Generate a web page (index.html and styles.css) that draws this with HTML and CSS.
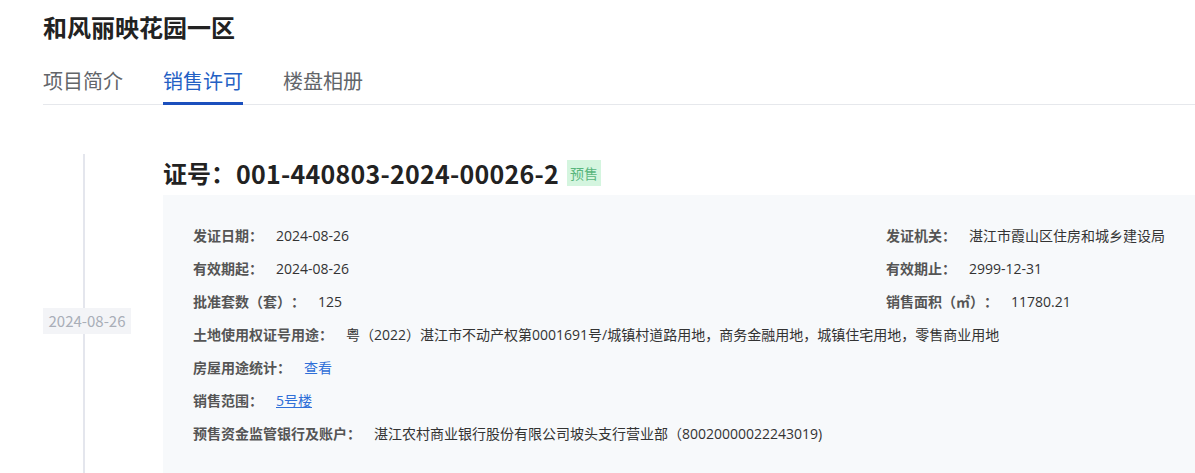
FILE: index.html
```html
<!DOCTYPE html>
<html lang="zh-CN">
<head>
<meta charset="utf-8">
<title>和风丽映花园一区</title>
<link rel="stylesheet" href="styles.css">
</head>
<body>
<div class="page">
  <h1 class="title">和风丽映花园一区</h1>
  <nav class="tabs">
    <span class="tab">项目简介</span>
    <span class="tab active">销售许可</span>
    <span class="tab">楼盘相册</span>
  </nav>
  <div class="item">
    <div class="rail"><span class="date">2024-08-26</span></div>
    <div class="content">
      <div class="heading"><span class="cert-label">证号：</span><span class="cert-no">001-440803-2024-00026-2</span><span class="tag">预售</span></div>
      <div class="box">
        <div class="row"><span class="label">发证日期：</span><span class="value">2024-08-26</span></div>
        <div class="row"><span class="label">发证机关：</span><span class="value">湛江市霞山区住房和城乡建设局</span></div>
        <div class="row"><span class="label">有效期起：</span><span class="value">2024-08-26</span></div>
        <div class="row"><span class="label">有效期止：</span><span class="value">2999-12-31</span></div>
        <div class="row"><span class="label">批准套数（套）：</span><span class="value">125</span></div>
        <div class="row"><span class="label">销售面积（㎡）：</span><span class="value">11780.21</span></div>
        <div class="row full"><span class="label">土地使用权证号用途：</span><span class="value">粤（2022）湛江市不动产权第0001691号/城镇村道路用地，商务金融用地，城镇住宅用地，零售商业用地</span></div>
        <div class="row full"><span class="label">房屋用途统计：</span><a class="value link">查看</a></div>
        <div class="row full"><span class="label">销售范围：</span><a class="value link under">5号楼</a></div>
        <div class="row full"><span class="label">预售资金监管银行及账户：</span><span class="value">湛江农村商业银行股份有限公司坡头支行营业部（80020000022243019)</span></div>
      </div>
    </div>
  </div>
</div>
</body>
</html>
```

FILE: styles.css
```css
* { box-sizing: border-box; }
html, body { margin: 0; padding: 0; background: #fff; }
body {
  font-family: "Noto Sans CJK SC", "Noto Sans", sans-serif;
  color: #333;
  overflow: hidden;
  text-spacing-trim: space-all;
}
.page { padding: 0 0 0 43px; }
.title {
  margin: 11px 0 0;
  font-size: 24px;
  line-height: 32px;
  font-weight: 700;
  color: #222;
}
.tabs {
  display: flex;
  gap: 40px;
  margin-top: 24px;
  border-bottom: 1px solid #e6e8ec;
}
.tab {
  font-size: 20px;
  line-height: 28px;
  padding-bottom: 7px;
  border-bottom: 3px solid transparent;
  margin-bottom: -1px;
  color: #626569;
}
.tab.active {
  color: #2360c4;
  border-bottom-color: #1b4fbd;
}
.item {
  display: grid;
  grid-template-columns: 120px 1fr;
  margin-top: 49px;
}
.rail {
  display: flex;
  align-items: center;
  background: linear-gradient(#e4e6ed, #e4e6ed) 40px 0 / 2px 100% no-repeat;
}
.date {
  width: 88px;
  height: 26px;
  line-height: 26px;
  text-align: center;
  font-size: 15px;
  color: #a9aeb8;
  background: #f3f4f7;
}
.heading {
  margin-top: 1px;
  font-size: 24px;
  line-height: 36px;
  font-weight: 700;
  color: #222;
  display: flex;
  align-items: center;
}
.cert-label { width: 73px; }
.cert-no { font-size: 25px; letter-spacing: 0.25px; }
.tag {
  margin-left: 8px;
  font-size: 14px;
  font-weight: 400;
  line-height: 26px;
  padding: 0 3px;
  letter-spacing: 0;
  color: #58b57c;
  background: #d4f5df;
}
.box {
  margin-top: 4px;
  background: #f7f9fb;
  padding: 24px 30px 37px;
  display: grid;
  grid-template-columns: 1fr auto;
  font-size: 14px;
  line-height: 33px;
}
.row { display: flex; white-space: nowrap; }
.row.full { grid-column: 1 / -1; }
.label { font-weight: 700; color: #555; margin-right: 13px; }
.value { color: #333; font-family: "Open Sans", "Noto Sans CJK SC", sans-serif; }
.link { color: #2f6fd8; cursor: pointer; }
.link.under { text-decoration: underline; }
```
